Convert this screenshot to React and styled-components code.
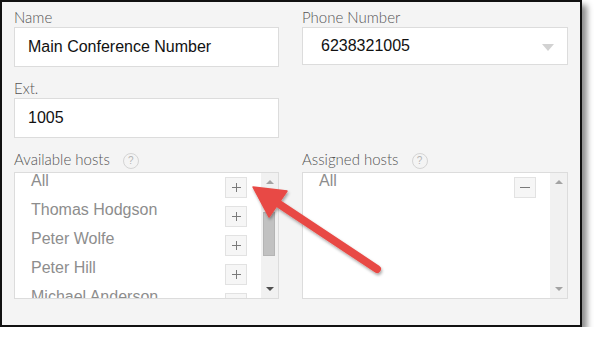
import React from 'react';
import styled, { createGlobalStyle } from 'styled-components';

const GlobalStyle = createGlobalStyle`
  body {
    margin: 0;
    background: #fff;
  }
`;

const available = ['All', 'Thomas Hodgson', 'Peter Wolfe', 'Peter Hill', 'Michael Anderson'];
const assigned = ['All'];

const HelpIcon = () => <Help>?</Help>;

const HostList = ({ items, sign, thumb }) => (
  <ListBox>
    <Rows>
      {items.map((name, index) => (
        <Row key={index}>
          <Host>{name}</Host>
          <RowButton>{sign === '+' ? <Plus /> : <Minus />}</RowButton>
        </Row>
      ))}
    </Rows>
    <ScrollTrack>
      <ScrollArrow $up $dark={false} />
      {thumb && <Thumb />}
      <ScrollArrow $dark={thumb} />
    </ScrollTrack>
  </ListBox>
);

const App = () => {
  return (
    <>
      <GlobalStyle />
      <Window>
        <Grid>
          <Field>
            <Label>Name</Label>
            <TextBox>Main Conference Number</TextBox>
          </Field>
          <Field>
            <Label>Phone Number</Label>
            <TextBox $select>
              6238321005
              <Caret />
            </TextBox>
          </Field>
          <Field>
            <Label>Ext.</Label>
            <TextBox>1005</TextBox>
          </Field>
          <div />
          <Field>
            <Label $hosts>
              Available hosts <HelpIcon />
            </Label>
            <HostList items={available} sign="+" thumb />
          </Field>
          <Field>
            <Label $hosts>
              Assigned hosts <HelpIcon />
            </Label>
            <HostList items={assigned} sign="-" />
          </Field>
        </Grid>
        <Overlay width="596" height="342" viewBox="0 0 596 342">
          <defs>
            <filter id="shade" x="-20%" y="-20%" width="140%" height="140%">
              <feDropShadow dx="1" dy="2" stdDeviation="1.5" floodColor="#000" floodOpacity="0.35" />
            </filter>
          </defs>
          <g filter="url(#shade)">
            <line x1="276" y1="202" x2="377" y2="269" stroke="#e84a45" strokeWidth="8" strokeLinecap="round" />
            <polygon points="253,187 269,217 287,191" fill="#e84a45" stroke="#e84a45" strokeWidth="1.5" strokeLinejoin="round" />
          </g>
        </Overlay>
      </Window>
    </>
  );
};

export default App;

const Window = styled.div`
  position: relative;
  box-sizing: border-box;
  width: 582px;
  height: 327px;
  border: 2px solid #111;
  background: #f4f4f4;
  box-shadow: 5px 5px 6px rgba(0, 0, 0, 0.45);
  padding: 5px 12px 0 12px;
`;

const Grid = styled.div`
  display: grid;
  grid-template-columns: 265px 266px;
  column-gap: 23px;
  row-gap: 11px;
`;

const Field = styled.div`
  display: flex;
  flex-direction: column;
`;

const Label = styled.div`
  display: flex;
  align-items: center;
  gap: 13px;
  font-family: Lato, sans-serif;
  font-weight: 300;
  font-size: 15px;
  line-height: 20px;
  color: #555;
  margin-bottom: ${p => (p.$hosts ? '3px' : '0')};
`;

const Help = styled.span`
  box-sizing: border-box;
  width: 16px;
  height: 16px;
  border: 1px solid #d4d4d4;
  border-radius: 50%;
  display: inline-flex;
  align-items: center;
  justify-content: center;
  font-family: 'Liberation Sans', sans-serif;
  font-size: 10px;
  color: #b5b5b5;
  margin-top: 3px;
`;

const TextBox = styled.div`
  position: relative;
  box-sizing: border-box;
  height: ${p => (p.$select ? '38px' : '40px')};
  background: #fff;
  border: 1px solid #dcdcdc;
  display: flex;
  align-items: center;
  padding-left: ${p => (p.$select ? '18px' : '13px')};
  font-family: 'Liberation Sans', Arial, sans-serif;
  font-size: 16px;
  color: #111;
`;

const Caret = styled.span`
  position: absolute;
  right: 13px;
  top: 16px;
  width: 0;
  height: 0;
  border-left: 6.5px solid transparent;
  border-right: 6.5px solid transparent;
  border-top: 7px solid #d2d2d2;
`;

const ListBox = styled.div`
  box-sizing: border-box;
  height: 127px;
  background: #fff;
  border: 1px solid #dcdcdc;
  display: flex;
  overflow: hidden;
`;

const Rows = styled.div`
  flex: 1;
  padding-left: 16px;
  padding-right: 14px;
`;

const Row = styled.div`
  height: 29px;
  display: flex;
  justify-content: space-between;
  align-items: flex-start;
`;

const Host = styled.span`
  font-family: 'Liberation Sans', Arial, sans-serif;
  font-size: 16px;
  line-height: 16px;
  color: #8d8d8d;
`;

const RowButton = styled.span`
  box-sizing: border-box;
  margin-top: 4px;
  width: 22px;
  height: 21px;
  background: #f6f6f6;
  border: 1px solid #e2e2e2;
  display: flex;
  align-items: center;
  justify-content: center;
`;

const Plus = styled.span`
  position: relative;
  width: 9px;
  height: 9px;
  &::before,
  &::after {
    content: '';
    position: absolute;
    background: #7a7a7a;
  }
  &::before {
    left: 0;
    top: 4px;
    width: 9px;
    height: 1px;
  }
  &::after {
    left: 4px;
    top: 0;
    width: 1px;
    height: 9px;
  }
`;

const Minus = styled.span`
  width: 10px;
  height: 1px;
  background: #7a7a7a;
`;

const ScrollTrack = styled.div`
  width: 17px;
  flex-shrink: 0;
  background: #f1f1f1;
  display: flex;
  flex-direction: column;
  align-items: center;
  justify-content: space-between;
  padding: 7px 0 7px;
  box-sizing: border-box;
  position: relative;
`;

const ScrollArrow = styled.span`
  width: 0;
  height: 0;
  border-left: 4px solid transparent;
  border-right: 4px solid transparent;
  ${p =>
    p.$up
      ? 'border-bottom: 4px solid #a3a3a3;'
      : `border-top: 4px solid ${p.$dark ? '#505050' : '#a3a3a3'};`}
`;

const Thumb = styled.span`
  position: absolute;
  left: 2px;
  top: 39px;
  width: 12px;
  height: 44px;
  box-sizing: border-box;
  background: #c1c1c1;
  border: 1px solid #b4b4b4;
`;

const Overlay = styled.svg`
  position: absolute;
  left: -2px;
  top: -2px;
  pointer-events: none;
  overflow: visible;
`;
